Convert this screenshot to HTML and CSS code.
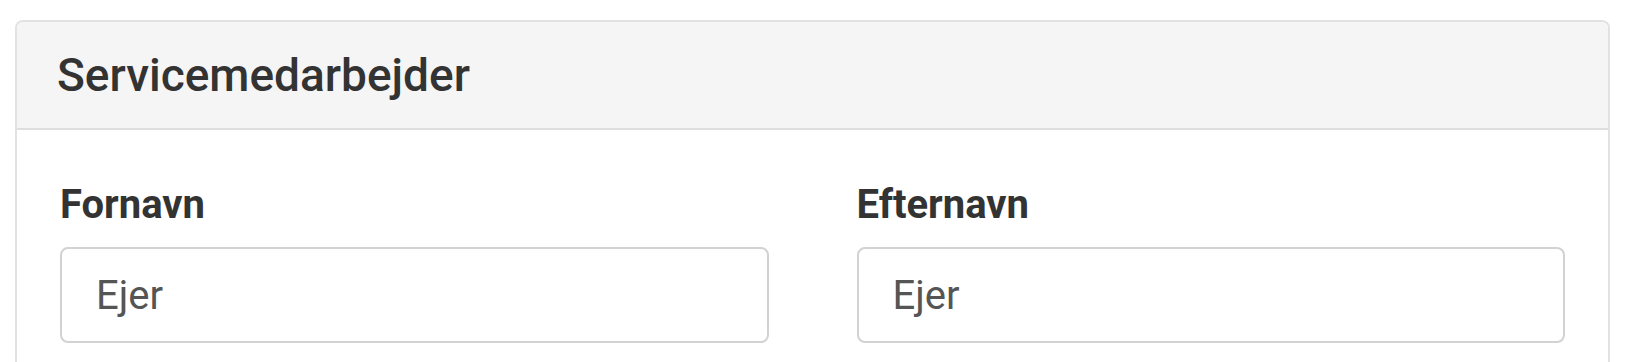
FILE: index.html
```html
<!DOCTYPE html>
<html lang="da">
<head>
<meta charset="utf-8">
<title>Servicemedarbejder</title>
<link rel="stylesheet" href="styles.css">
</head>
<body>
<div class="page">
  <section class="panel">
    <header class="panel-heading">
      <h3 class="panel-title">Servicemedarbejder</h3>
    </header>
    <div class="panel-body">
      <div class="form-grid">
        <div class="form-group">
          <label class="form-label" for="fornavn">Fornavn</label>
          <input class="form-control" id="fornavn" type="text" value="Ejer">
        </div>
        <div class="form-group">
          <label class="form-label" for="efternavn">Efternavn</label>
          <input class="form-control" id="efternavn" type="text" value="Ejer">
        </div>
      </div>
    </div>
  </section>
</div>
</body>
</html>
```

FILE: styles.css
```css
html, body {
  margin: 0;
  padding: 0;
  background: #ffffff;
}

body {
  font-family: Roboto, "Liberation Sans", Arial, sans-serif;
  color: #333333;
  height: 362px;
  overflow: hidden;
}

.page {
  box-sizing: border-box;
  height: 362px;
  padding: 20px 18px 0 15px;
}

.panel {
  box-sizing: border-box;
  height: 342px;
  border: 2px solid #e2e2e2;
  border-bottom: none;
  border-radius: 8px 8px 0 0;
  background: #ffffff;
}

.panel-heading {
  background: #f5f5f5;
  border-bottom: 2px solid #dedede;
  border-radius: 6px 6px 0 0;
  height: 106px;
  padding: 0 40px;
  display: flex;
  align-items: center;
}

.panel-title {
  margin: 0;
  font-size: 46px;
  font-weight: 500;
  line-height: 1.1;
  color: #333333;
}

.panel-body {
  padding: 54px 43px 0 43px;
}

.form-grid {
  display: grid;
  grid-template-columns: 1fr 1fr;
  column-gap: 88px;
}

.form-group {
  display: flex;
  flex-direction: column;
}

.form-label {
  font-size: 40px;
  font-weight: 700;
  line-height: 42px;
  color: #333333;
  margin-bottom: 21px;
}

.form-control {
  box-sizing: border-box;
  height: 96px;
  width: 100%;
  border: 2px solid #d2d2d2;
  border-radius: 8px;
  padding: 0 34px;
  font-family: Roboto, "Liberation Sans", Arial, sans-serif;
  font-size: 40px;
  color: #555555;
  background: #ffffff;
  outline: none;
}
```
